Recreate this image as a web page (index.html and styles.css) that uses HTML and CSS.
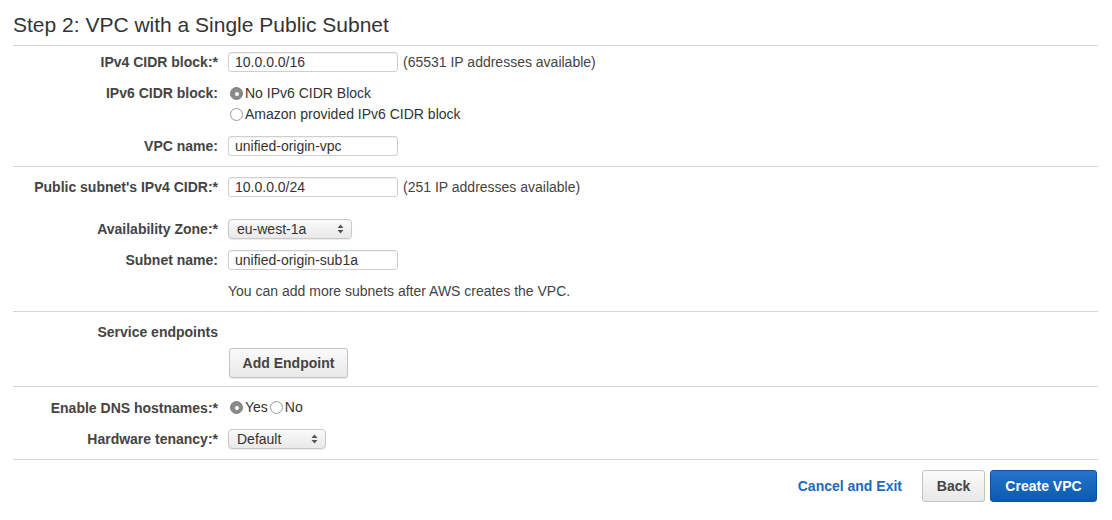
FILE: index.html
```html
<!doctype html>
<html><head>
	<meta charset="utf-8">
	<title>Create VPC</title>
	<link rel="stylesheet" href="styles.css">
</head><body>
	<h1>Step 2: VPC with a Single Public Subnet</h1>

	<div class="section first">
		<div class="row">
			<label class="label">IPv4 CIDR block:*</label>
			<div class="field"><input class="text" value="10.0.0.0/16"> <span class="note">(65531 IP addresses available)</span></div>
		</div>
		<div class="row">
			<label class="label top">IPv6 CIDR block:</label>
			<div class="field stack">
				<span class="radio"><span class="dot on"></span>No IPv6 CIDR Block</span>
				<span class="radio"><span class="dot"></span>Amazon provided IPv6 CIDR block</span>
			</div>
		</div>
		<div class="row">
			<label class="label">VPC name:</label>
			<div class="field"><input class="text" value="unified-origin-vpc"></div>
		</div>
	</div>

	<div class="section second">
		<div class="row">
			<label class="label">Public subnet's IPv4 CIDR:*</label>
			<div class="field"><input class="text" value="10.0.0.0/24"> <span class="note">(251 IP addresses available)</span></div>
		</div>
		<div class="row spaced">
			<label class="label">Availability Zone:*</label>
			<div class="field">
				<span class="select zone">eu-west-1a
					<svg class="arrows" width="7" height="10" viewBox="0 0 7 10"><path d="M3.5 0.5 L6.5 4 H0.5 Z M3.5 9.5 L6.5 6 H0.5 Z" fill="#555"/></svg>
				</span>
			</div>
		</div>
		<div class="row">
			<label class="label">Subnet name:</label>
			<div class="field"><input class="text" value="unified-origin-sub1a"></div>
		</div>
		<div class="row">
			<span class="label"></span>
			<div class="field help">You can add more subnets after AWS creates the VPC.</div>
		</div>
	</div>

	<div class="section third">
		<div class="row">
			<label class="label">Service endpoints</label>
			<div class="field"></div>
		</div>
		<div class="row tight">
			<span class="label"></span>
			<div class="field"><button class="btn endpoint">Add Endpoint</button></div>
		</div>
	</div>

	<div class="section fourth">
		<div class="row">
			<label class="label">Enable DNS hostnames:*</label>
			<div class="field inline">
				<span class="radio"><span class="dot on"></span>Yes</span>
				<span class="radio"><span class="dot"></span>No</span>
			</div>
		</div>
		<div class="row">
			<label class="label">Hardware tenancy:*</label>
			<div class="field">
				<span class="select tenancy">Default
					<svg class="arrows" width="7" height="10" viewBox="0 0 7 10"><path d="M3.5 0.5 L6.5 4 H0.5 Z M3.5 9.5 L6.5 6 H0.5 Z" fill="#555"/></svg>
				</span>
			</div>
		</div>
	</div>

	<div class="footer">
		<a class="cancel" href="#">Cancel and Exit</a>
		<button class="btn back">Back</button>
		<button class="btn primary">Create VPC</button>
	</div>
</body></html>
```

FILE: styles.css
```css
body {
	margin: 0 14px 0 13px;
	background: #fff;
	color: #333;
	font: 14px/20px 'Liberation Sans', Arial, sans-serif;
}

h1 {
	margin: 0;
	padding: 12px 0 8px 0;
	font: normal 21px/25px 'Liberation Sans', Arial, sans-serif;
	color: #333;
	border-bottom: 1px solid #d5d5d5;
}

.section {
	border-bottom: 1px solid #d5d5d5;
	display: flex;
	flex-direction: column;
	gap: 11px;
}

.section.first { padding: 6px 0 10px; }
.section.second { padding: 10px 0 10px; }
.section.third { padding: 10px 0 8px; gap: 6px; }
.section.fourth { padding: 10px 0 10px; }

.row {
	display: grid;
	grid-template-columns: 205px 1fr;
	column-gap: 10px;
	align-items: center;
}

.row.spaced { margin-top: 11px; }

.label {
	text-align: right;
	font-weight: bold;
	color: #444;
}

.label.top {
	align-self: start;
	line-height: 21px;
}

.field {
	display: flex;
	align-items: center;
	min-height: 20px;
}

.field.stack {
	flex-direction: column;
	align-items: flex-start;
}

.note {
	margin-left: 5px;
	color: #444;
}

.help {
	color: #444;
}

.text {
	box-sizing: border-box;
	width: 170px;
	height: 20px;
	margin: 0;
	padding: 0 6px;
	border: 1px solid #cfcfcf;
	border-radius: 3px;
	box-shadow: inset 0 1px 1px rgba(0,0,0,0.06);
	font: 14px 'Liberation Sans', Arial, sans-serif;
	color: #333;
	background: #fff;
}

.radio {
	display: flex;
	align-items: center;
	line-height: 21px;
	color: #333;
}

.dot {
	box-sizing: border-box;
	width: 13px;
	height: 13px;
	margin: 0 2px 0 2px;
	border: 1px solid #9a9a9a;
	border-radius: 50%;
	background: #fff;
	position: relative;
}

.dot.on {
	background: #8a8a8a;
	border-color: #7f7f7f;
}

.dot.on::after {
	content: "";
	position: absolute;
	left: 3.5px;
	top: 3.5px;
	width: 4px;
	height: 4px;
	border-radius: 50%;
	background: #fff;
}

.select {
	position: relative;
	box-sizing: border-box;
	height: 20px;
	padding: 0 0 0 8px;
	border: 1px solid #c9c9c9;
	border-radius: 4px;
	background: linear-gradient(#fafafa, #e9e9e9);
	box-shadow: 0 1px 1px rgba(0,0,0,0.08);
	line-height: 18px;
	color: #333;
}

.select.zone { width: 124px; }
.select.tenancy { width: 98px; }

.arrows {
	position: absolute;
	right: 7px;
	top: 4px;
}

.btn {
	box-sizing: border-box;
	height: 30px;
	border-radius: 3px;
	font: bold 14px 'Liberation Sans', Arial, sans-serif;
	cursor: pointer;
}

.endpoint, .back {
	border: 1px solid #c3c3c3;
	background: linear-gradient(#fbfbfb, #e8e8e8);
	color: #444;
	box-shadow: 0 1px 1px rgba(0,0,0,0.08);
}

.endpoint {
	width: 119px;
	margin-left: 1px;
}

.footer {
	display: flex;
	justify-content: flex-end;
	align-items: center;
	padding: 10px 1px 0 0;
}

.cancel {
	font-weight: bold;
	font-size: 14px;
	color: #1b6ac0;
	text-decoration: none;
	margin-right: 20px;
}

.back {
	width: 63px;
	height: 32px;
}

.primary {
	width: 107px;
	height: 32px;
	margin-left: 5px;
	border: 1px solid #0b55a5;
	background: linear-gradient(#2374cb, #0c5aac);
	color: #fff;
}
```
